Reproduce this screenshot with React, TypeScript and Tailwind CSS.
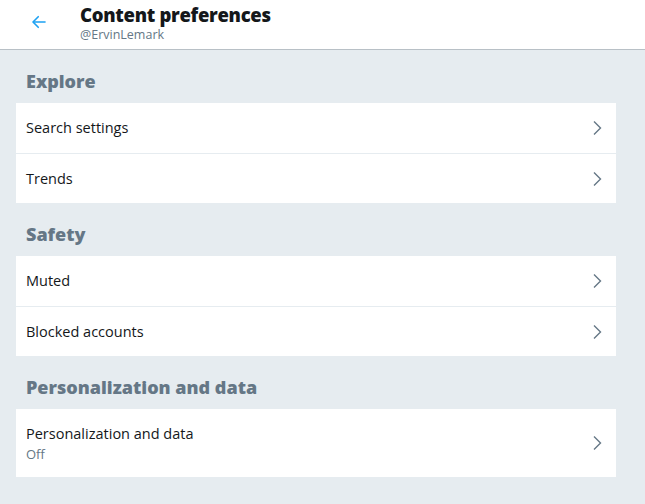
import React from 'react';

type Row = { label: string; sub?: string };

const sections: { title: string; rows: Row[] }[] = [
  { title: 'Explore', rows: [{ label: 'Search settings' }, { label: 'Trends' }] },
  { title: 'Safety', rows: [{ label: 'Muted' }, { label: 'Blocked accounts' }] },
  { title: 'Personalization and data', rows: [{ label: 'Personalization and data', sub: 'Off' }] },
];

const Chevron = () => (
  <svg width="10" height="16" viewBox="0 0 10 16" fill="none" stroke="#657786" strokeWidth="1.4">
    <path d="M2 1.5 L8.5 8 L2 14.5" />
  </svg>
);

const App: React.FC = () => {
  return (
    <div className="min-h-screen w-full bg-[#e6ecf0] font-['Segoe_UI','Open_Sans',sans-serif]">
      <header className="flex h-[50px] items-start border-b border-[#b8c0c6] bg-white">
        <div className="mt-[13px] flex w-[80px] justify-center pr-[2px]">
          <svg width="18" height="18" viewBox="0 0 24 24" fill="none" stroke="#1da1f2" strokeWidth="2.2" strokeLinecap="round" strokeLinejoin="round">
            <path d="M20 12H5" />
            <path d="M11 5l-7 7 7 7" />
          </svg>
        </div>
        <div className="flex flex-col pt-[3px]">
          <h1 className="text-[18.5px] leading-[24px] font-extrabold tracking-[-0.3px] text-[#14171a]">Content preferences</h1>
          <span className="text-[12.5px] leading-[16px] text-[#657786]">@ErvinLemark</span>
        </div>
      </header>

      <main className="pl-4">
        {sections.map((s) => (
          <section key={s.title} className="w-[600px]">
            <h2 className="flex h-[53px] items-end px-[10px] pb-[8px] text-[18px] font-extrabold text-[#657786]">{s.title}</h2>
            <div className="bg-white">
              {s.rows.map((r, i) => (
                <div
                  key={r.label}
                  className={`flex items-center justify-between pl-[10px] pr-[14px] ${r.sub ? 'h-[68px]' : 'h-[50px]'} ${i > 0 ? 'border-t border-[#e6ecf0]' : ''}`}
                >
                  <div className="flex flex-col">
                    <span className="text-[14.5px] text-[#14171a]">{r.label}</span>
                    {r.sub && <span className="text-[13px] leading-[18px] text-[#657786]">{r.sub}</span>}
                  </div>
                  <Chevron />
                </div>
              ))}
            </div>
          </section>
        ))}
      </main>
    </div>
  );
};

export default App;
